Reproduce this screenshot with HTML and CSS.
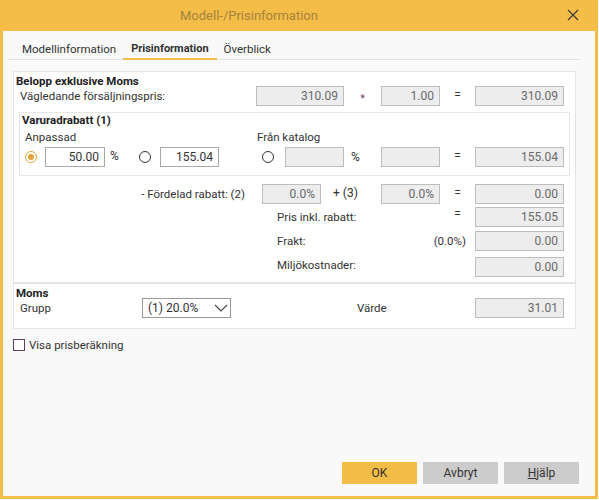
FILE: index.html
```html
<!DOCTYPE html>
<html lang="sv">
<head>
    <meta charset="UTF-8">
    <title>Modell-/Prisinformation</title>
    <link rel="stylesheet" href="styles.css">
</head>
<body>
    <div class="window">
        <div class="titlebar">
            <span class="title">Modell-/Prisinformation</span>
            <svg class="close" width="12" height="12" viewBox="0 0 12 12">
                <path d="M1 1 L11 11 M11 1 L1 11" stroke="#3a3a3a" stroke-width="1.2" fill="none"/>
            </svg>
        </div>

        <div class="tabs">
            <div class="tab">Modellinformation</div>
            <div class="tab active">Prisinformation</div>
            <div class="tab">Överblick</div>
        </div>

        <div class="panel">
            <div class="heading">Belopp exklusive Moms</div>
            <div class="row">
                <div class="lbl w242">Vägledande försäljningspris:</div>
                <div class="field ro w88">310.09</div>
                <div class="op w37 star">*</div>
                <div class="field ro w59">1.00</div>
                <div class="op w35 eq">=</div>
                <div class="field ro w89">310.09</div>
            </div>

            <div class="subpanel">
                <div class="heading">Varuradrabatt (1)</div>
                <div class="row labels">
                    <div class="lbl w237 pl5">Anpassad</div>
                    <div class="lbl">Från katalog</div>
                </div>
                <div class="row">
                    <span class="radio checked ml5"></span>
                    <div class="field edit w60 ml8">50.00</div>
                    <div class="op w34 pct">%</div>
                    <span class="radio"></span>
                    <div class="field edit w59 ml9">155.04</div>
                    <span class="radio ml43"></span>
                    <div class="field ro w59 ml11"></div>
                    <div class="op w37 pct2">%</div>
                    <div class="field ro w59"></div>
                    <div class="op w35 eq">=</div>
                    <div class="field ro w89">155.04</div>
                </div>
            </div>

            <div class="row rowa">
                <div class="lbl w248 right">- Fördelad rabatt: (2)</div>
                <div class="field ro w59">0.0%</div>
                <div class="op w60 plus">+ (3)</div>
                <div class="field ro w59">0.0%</div>
                <div class="op w35 eq">=</div>
                <div class="field ro w89">0.00</div>
            </div>
            <div class="row rowb">
                <div class="lbl w426 pl263">Pris inkl. rabatt:</div>
                <div class="op w35 eq up">=</div>
                <div class="field ro w89">155.05</div>
            </div>
            <div class="row rowc">
                <div class="lbl w461 pl263 split"><span>Frakt:</span><span>(0.0%)</span></div>
                <div class="field ro w89">0.00</div>
            </div>
            <div class="row rowd">
                <div class="lbl w461 pl263 up">Miljökostnader:</div>
                <div class="field ro w89">0.00</div>
            </div>
        </div>

        <div class="panel moms">
            <div class="heading">Moms</div>
            <div class="row">
                <div class="lbl w128">Grupp</div>
                <div class="select">
                    <span>(1) 20.0%</span>
                    <svg width="14" height="8" viewBox="0 0 14 8">
                        <path d="M1 1 L7 7 L13 1" stroke="#444" stroke-width="1.1" fill="none"/>
                    </svg>
                </div>
                <div class="lbl w244 pl126">Värde</div>
                <div class="field ro w89">31.01</div>
            </div>
        </div>

        <label class="check">
            <span class="box"></span>
            <span>Visa prisberäkning</span>
        </label>

        <div class="footer">
            <button class="btn primary">OK</button>
            <button class="btn">Avbryt</button>
            <button class="btn"><u>H</u>jälp</button>
        </div>
    </div>
</body>
</html>
```

FILE: styles.css
```css
:root {
    --sap-yellow: #f4bd48;
    --line: #e6e6e6;
    --text: #333;
}
* {
    box-sizing: border-box;
}
body {
    margin: 0;
    background: #fff;
    font-family: Roboto, "Liberation Sans", sans-serif;
    font-size: 11.5px;
    color: var(--text);
}
.window {
    width: 598px;
    height: 499px;
    background: #f9f9f9;
    border: 3px solid var(--sap-yellow);
    border-top: none;
    display: flex;
    flex-direction: column;
}
.titlebar {
    height: 31px;
    margin: 0 -3px;
    padding-left: 180px;
    background: var(--sap-yellow);
    display: flex;
    align-items: center;
    position: relative;
}
.title {
    font-size: 13px;
    color: #a3843f;
}
.close {
    position: absolute;
    right: 19px;
    top: 9px;
}
.tabs {
    display: flex;
    margin: 6px 15px 0 5px;
    padding-left: 7px;
    border-bottom: 1px solid #e3e3e3;
}
.tab {
    padding: 4px 7px 1px;
    line-height: 16px;
    border-bottom: 2px solid transparent;
    margin-bottom: -1px;
    font-size: 11.5px;
}
.tab.active {
    font-weight: bold;
    font-size: 11px;
    padding: 4px 8px 1px;
    border-bottom-color: var(--sap-yellow);
}
.panel {
    margin: 11px 0 0 10px;
    width: 563px;
    background: #fff;
    border: 1px solid var(--line);
    padding-bottom: 5px;
}
.panel.moms {
    margin-top: 0;
    border-top: 1px solid #e0e0e0;
    padding-bottom: 10px;
}
.heading {
    font-weight: bold;
    padding: 2px 0 0 2px;
    line-height: 14px;
    color: #222;
}
.heading + .row {
    margin-top: -2px;
}
.row {
    display: flex;
    align-items: center;
    height: 20px;
}
.subpanel {
    margin: 6px 0 0 5px;
    width: 551px;
    border: 1px solid var(--line);
    padding-bottom: 8px;
}
.subpanel .heading {
    padding-top: 0;
    line-height: 14px;
}
.subpanel .row.labels {
    margin-top: 3px;
    height: 14px;
    margin-bottom: 3px;
}
.lbl {
    white-space: nowrap;
}
.right {
    text-align: right;
    padding-right: 17px;
}
.split {
    display: flex;
    justify-content: space-between;
    padding-right: 9px;
}
.up {
    align-self: flex-start;
    margin-top: 1px;
}
.rowb .up {
    margin-top: 0;
    line-height: 14px;
}
.rowd .up {
    margin-top: 1px;
}
.field {
    height: 20px;
    line-height: 18px;
    border: 1px solid #bdbdbd;
    text-align: right;
    padding-right: 5px;
    font-size: 12px;
    color: #6a6a6a;
}
.field.ro {
    background: #ededed;
}
.field.edit {
    background: #fff;
    border-color: #a8a8a8;
    color: #333;
}
.op {
    text-align: center;
    font-size: 12px;
}
.star {
    color: #7b3b70;
    padding-top: 5px;
    font-size: 11px;
}
.eq {
    padding-bottom: 2px;
}
.pct {
    text-align: left;
    padding-left: 5px;
    padding-bottom: 3px;
}
.pct2 {
    text-align: left;
    padding-left: 7px;
}
.plus {
    text-align: left;
    padding-left: 12px;
    padding-bottom: 3px;
}
.radio {
    width: 12px;
    height: 12px;
    border: 1.2px solid #333;
    border-radius: 50%;
    flex: none;
    display: inline-flex;
    align-items: center;
    justify-content: center;
}
.radio.checked {
    border-color: #e3a33c;
}
.radio.checked::after {
    content: "";
    width: 6px;
    height: 6px;
    border-radius: 50%;
    background: #e3a33c;
}
.rowa { margin-top: 8px; }
.rowb { margin-top: 3px; }
.rowc { margin-top: 4px; }
.rowd { margin-top: 6px; }

.select {
    width: 89px;
    height: 20px;
    border: 1px solid #9a9a9a;
    display: flex;
    align-items: center;
    justify-content: space-between;
    padding: 0 2px 0 5px;
    font-size: 12px;
    background: #fff;
}
.check {
    display: flex;
    align-items: center;
    margin: 9px 0 0 10px;
    gap: 4px;
}
.box {
    width: 12px;
    height: 12px;
    border: 1px solid #5a3f5e;
    background: #fff;
}
.footer {
    margin-top: auto;
    display: flex;
    justify-content: flex-end;
    gap: 6px;
    padding: 0 16px 12px 0;
}
.btn {
    width: 75px;
    height: 22px;
    border: none;
    background: #cccccc;
    color: #333;
    font-family: Roboto, "Liberation Sans", sans-serif;
    font-size: 12px;
    cursor: pointer;
}
.btn.primary {
    background: var(--sap-yellow);
}

.w34 { width: 34px; }
.w35 { width: 35px; }
.w37 { width: 37px; }
.w59 { width: 59px; }
.w60 { width: 60px; }
.w88 { width: 88px; }
.w89 { width: 89px; }
.w128 { width: 128px; padding-left: 6px; }
.w237 { width: 237px; }
.w242 { width: 242px; padding-left: 6px; }
.w244 { width: 244px; }
.w248 { width: 248px; }
.w426 { width: 426px; }
.w461 { width: 461px; }
.pl5 { padding-left: 5px; }
.pl126 { padding-left: 126px; }
.pl263 { padding-left: 263px; }
.ml5 { margin-left: 5px; }
.ml8 { margin-left: 8px; }
.ml9 { margin-left: 9px; }
.ml11 { margin-left: 11px; }
.ml43 { margin-left: 43px; }
```
